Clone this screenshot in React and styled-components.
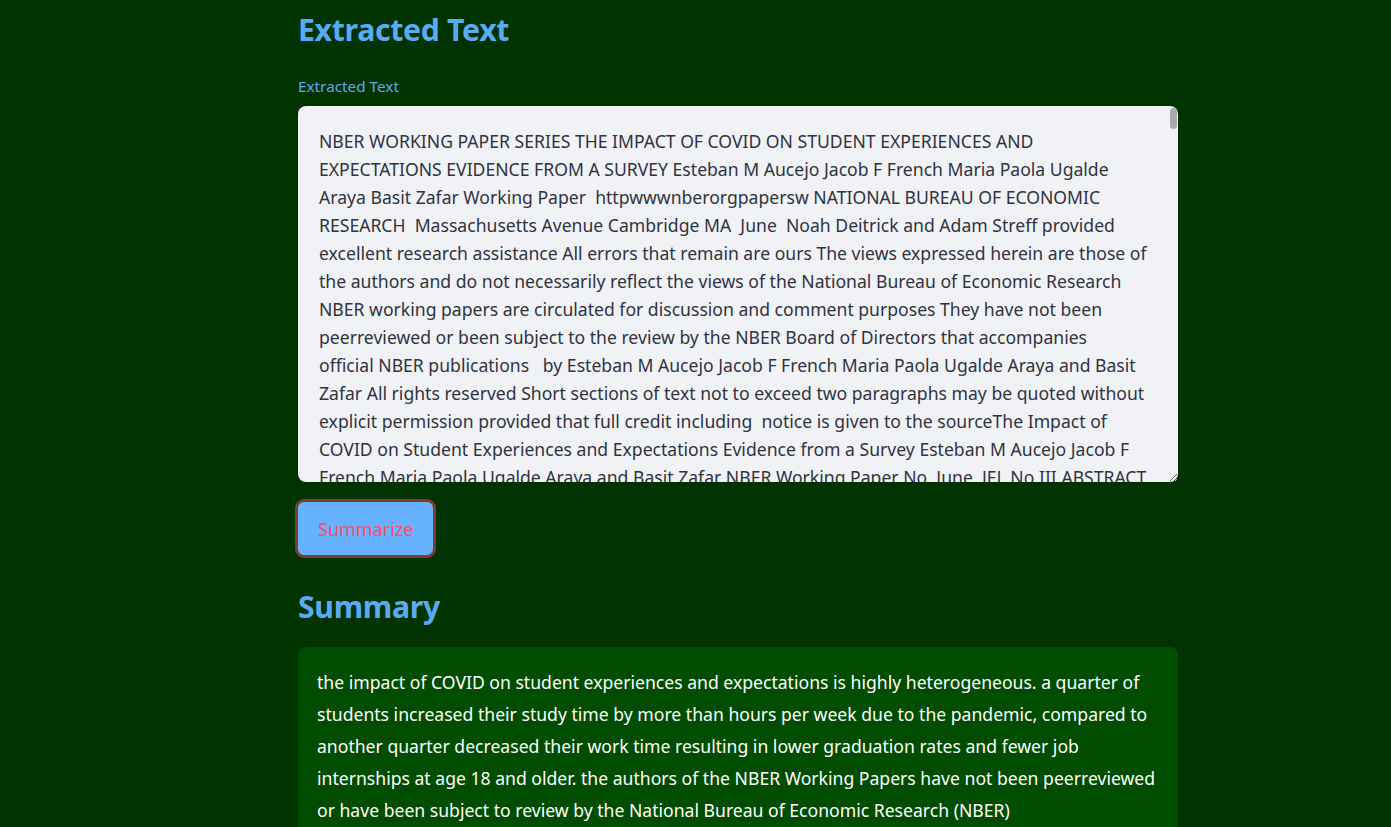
import styled, { createGlobalStyle } from 'styled-components';

const GlobalStyle = createGlobalStyle`
    html, body {
        margin: 0;
        padding: 0;
        background: #003300;
    }
    body {
        font-family: "Noto Sans", "Open Sans", sans-serif;
    }
`;

const extractedLines = [
    'NBER WORKING PAPER SERIES THE IMPACT OF COVID ON STUDENT EXPERIENCES AND',
    'EXPECTATIONS EVIDENCE FROM A SURVEY Esteban M Aucejo Jacob F French Maria Paola Ugalde',
    'Araya Basit Zafar Working Paper  httpwwwnberorgpapersw NATIONAL BUREAU OF ECONOMIC',
    'RESEARCH  Massachusetts Avenue Cambridge MA  June  Noah Deitrick and Adam Streff provided',
    'excellent research assistance All errors that remain are ours The views expressed herein are those of',
    'the authors and do not necessarily reflect the views of the National Bureau of Economic Research',
    'NBER working papers are circulated for discussion and comment purposes They have not been',
    'peerreviewed or been subject to the review by the NBER Board of Directors that accompanies',
    'official NBER publications   by Esteban M Aucejo Jacob F French Maria Paola Ugalde Araya and Basit',
    'Zafar All rights reserved Short sections of text not to exceed two paragraphs may be quoted without',
    'explicit permission provided that full credit including  notice is given to the sourceThe Impact of',
    'COVID on Student Experiences and Expectations Evidence from a Survey Esteban M Aucejo Jacob F',
    'French Maria Paola Ugalde Araya and Basit Zafar NBER Working Paper No  June  JEL No III ABSTRACT',
    'In order to understand the impact of the COVID pandemic on higher education we surveyed',
    'approximately  undergraduate students at Arizona State University one of the largest public',
    'institutions in the United States about their current and expected outcomes and how these',
    'outcomes have been affected by COVID',
];

const summaryLines = [
    'the impact of COVID on student experiences and expectations is highly heterogeneous. a quarter of',
    'students increased their study time by more than hours per week due to the pandemic, compared to',
    'another quarter decreased their work time resulting in lower graduation rates and fewer job',
    'internships at age 18 and older. the authors of the NBER Working Papers have not been peerreviewed',
    'or have been subject to review by the National Bureau of Economic Research (NBER)',
];

const App = () => {
    return (
        <>
            <GlobalStyle />
            <Page>
                <Main>
                    <Heading>Extracted Text</Heading>
                    <Field>
                        <Label htmlFor="extracted">Extracted Text</Label>
                        <AreaWrap>
                            <TextArea
                                id="extracted"
                                readOnly
                                value={extractedLines.join('\n')}
                            />
                            {/* scrollbar thumb, headless chrome hides the native one */}
                            <ScrollThumb />
                        </AreaWrap>
                    </Field>
                    <ButtonRow>
                        <SummarizeButton type="button">Summarize</SummarizeButton>
                    </ButtonRow>
                    <Heading $top={29}>Summary</Heading>
                    <SummaryBox>
                        {summaryLines.map((line) => (
                            <SummaryLine key={line}>{line}</SummaryLine>
                        ))}
                    </SummaryBox>
                </Main>
            </Page>
        </>
    );
};

const Page = styled.div`
    min-height: 100vh;
    background: #003300;
    display: flex;
    justify-content: flex-start;
    padding-left: 298px;
    box-sizing: border-box;
`;

const Main = styled.main`
    width: 880px;
    display: flex;
    flex-direction: column;
`;

const Heading = styled.h2`
    margin: ${(p) => p.$top || 10}px 0 0 0;
    font-family: "Noto Sans", "Open Sans", sans-serif;
    font-size: 30.2px;
    font-weight: 700;
    line-height: 40px;
    color: #5aabf5;
    letter-spacing: -0.3px;
`;

const Field = styled.div`
    display: flex;
    flex-direction: column;
    margin-top: 26px;
`;

const Label = styled.label`
    font-size: 15.3px;
    line-height: 20px;
    color: #5aabf5;
    margin-bottom: 10px;
`;

const AreaWrap = styled.div`
    position: relative;
    display: flex;
`;

const TextArea = styled.textarea`
    flex: 1;
    height: 376px;
    box-sizing: border-box;
    border: none;
    outline: none;
    resize: vertical;
    border-radius: 8px;
    background: #f0f2f6;
    color: #31333f;
    font-family: "Noto Sans", "Open Sans", sans-serif;
    font-size: 17.6px;
    line-height: 28px;
    padding: 21px 10px 0 21px;
    white-space: pre;
    overflow-y: scroll;
    overflow-x: hidden;
    scrollbar-width: none;

    &::-webkit-scrollbar {
        display: none;
    }
`;

const ScrollThumb = styled.div`
    position: absolute;
    top: 2px;
    right: 1px;
    width: 7px;
    height: 21px;
    border-radius: 4px;
    background: #a8aaaf;
`;

const ButtonRow = styled.div`
    display: flex;
    margin-top: 17px;
    margin-left: -3px;
`;

const SummarizeButton = styled.button`
    height: 59px;
    padding: 0 20px;
    background: #66b2ff;
    border: 3px solid #7b3e2a;
    border-radius: 9px;
    color: #ff4b6b;
    font-family: "Noto Sans", "Open Sans", sans-serif;
    font-size: 18px;
    cursor: pointer;
`;

const SummaryBox = styled.div`
    margin-top: 20px;
    background: #004d00;
    border-radius: 8px;
    padding: 19px 19px 24px 19px;
    color: #ffffff;
    font-size: 17.6px;
    line-height: 32px;
`;

const SummaryLine = styled.div`
    white-space: nowrap;
`;

export default App;
